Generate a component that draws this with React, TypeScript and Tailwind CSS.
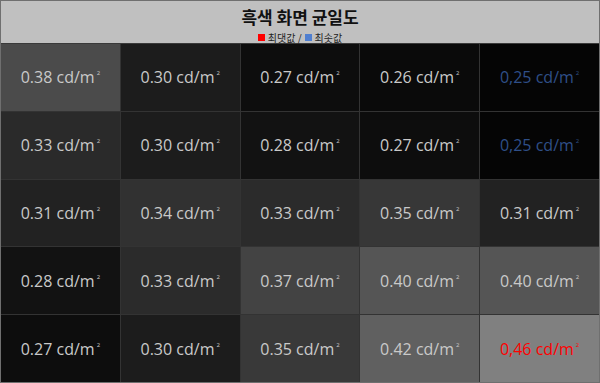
import React from 'react';

type Cell = { v: string; bg: string; kind?: 'max' | 'min' };

const rows: Cell[][] = [
    [
        { v: '0.38', bg: 'bg-[#4b4b4b]' },
        { v: '0.30', bg: 'bg-[#1c1c1c]' },
        { v: '0.27', bg: 'bg-[#0d0d0d]' },
        { v: '0.26', bg: 'bg-[#0a0a0a]' },
        { v: '0,25', bg: 'bg-[#050505]', kind: 'min' },
    ],
    [
        { v: '0.33', bg: 'bg-[#2a2a2a]' },
        { v: '0.30', bg: 'bg-[#1c1c1c]' },
        { v: '0.28', bg: 'bg-[#121212]' },
        { v: '0.27', bg: 'bg-[#0d0d0d]' },
        { v: '0,25', bg: 'bg-[#050505]', kind: 'min' },
    ],
    [
        { v: '0.31', bg: 'bg-[#222222]' },
        { v: '0.34', bg: 'bg-[#313131]' },
        { v: '0.33', bg: 'bg-[#2b2b2b]' },
        { v: '0.35', bg: 'bg-[#373737]' },
        { v: '0.31', bg: 'bg-[#222222]' },
    ],
    [
        { v: '0.28', bg: 'bg-[#121212]' },
        { v: '0.33', bg: 'bg-[#2b2b2b]' },
        { v: '0.37', bg: 'bg-[#434343]' },
        { v: '0.40', bg: 'bg-[#555555]' },
        { v: '0.40', bg: 'bg-[#555555]' },
    ],
    [
        { v: '0.27', bg: 'bg-[#0d0d0d]' },
        { v: '0.30', bg: 'bg-[#1c1c1c]' },
        { v: '0.35', bg: 'bg-[#393939]' },
        { v: '0.42', bg: 'bg-[#606060]' },
        { v: '0,46', bg: 'bg-[#808080]', kind: 'max' },
    ],
];

const textColor = (kind?: 'max' | 'min') =>
    kind === 'max' ? 'text-[#ff0000]' : kind === 'min' ? 'text-[#2f4f88]' : 'text-[#c9c9c9]';

export default function App() {
    return (
        <div className="w-[600px] h-[383px] flex flex-col border border-[#6f6f6f] bg-[#333333] font-['Segoe_UI','Open_Sans','Noto_Sans_CJK_KR',sans-serif]">
            {/* header */}
            <div className="h-[43px] shrink-0 bg-[#c0c0c0] border-b border-[#3a3a3a] flex flex-col items-center pt-[5px]">
                <h1 className="text-[17px] leading-[22px] font-bold text-[#111] font-['Noto_Sans_CJK_KR',sans-serif]">흑색 화면 균일도</h1>
                <div className="mt-[3px] flex items-center gap-[3px] text-[10px] leading-[13px] text-[#222] font-['Noto_Sans_CJK_KR',sans-serif]">
                    <span className="w-[7px] h-[7px] bg-[#ff0000]" />
                    <span>최댓값 /</span>
                    <span className="w-[7px] h-[7px] bg-[#4f7fd0]" />
                    <span>최솟값</span>
                </div>
            </div>

            {/* grid */}
            <div className="flex-1 grid grid-cols-5 grid-rows-5 gap-px bg-[#333333]">
                {rows.flat().map((c, i) => (
                    <div key={i} className={`${c.bg} flex items-center justify-center`}>
                        <span className={`text-[16px] leading-[20px] ${textColor(c.kind)}`}>
                            {c.v} cd/m<span className="inline-block text-[6px] leading-[6px] align-top relative top-[3px] ml-[2px]">2</span>
                        </span>
                    </div>
                ))}
            </div>
        </div>
    );
}
